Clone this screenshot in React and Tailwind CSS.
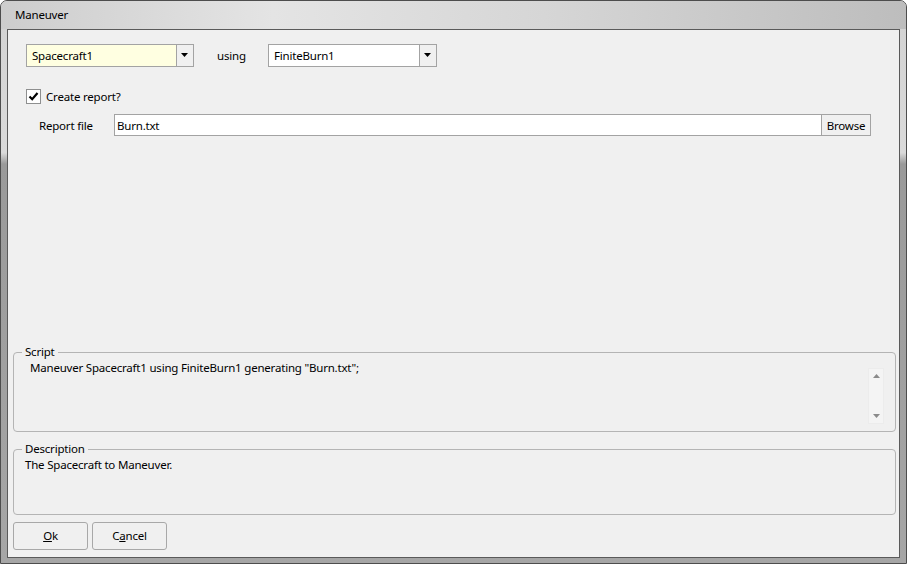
import React from 'react'

const font = { fontFamily: '"Noto Sans", "Open Sans", sans-serif' }

const Arrow = () => (
  <svg width="8" height="5" viewBox="0 0 8 5">
    <path d="M0 0 H7 L3.5 4 Z" fill="#000" />
  </svg>
)

const Combo = ({ value, bg }) => (
  <div className={`flex h-[23px] border border-[#a3a3a3] ${bg}`}>
    <div className="flex-1 flex items-center pl-[5px] text-[11.5px] tracking-[-0.2px] text-black">{value}</div>
    <div className="w-[17px] flex items-center justify-center border-l border-[#a3a3a3] bg-[#f0f0f0]">
      <Arrow />
    </div>
  </div>
)

const GroupBox = ({ title, className, children }) => (
  <fieldset className={`border border-[#b4b4b4] rounded-[4px] ${className}`}>
    <legend className="ml-[8px] px-[3px] text-[11.5px] tracking-[-0.2px] leading-[14px] text-black">{title}</legend>
    {children}
  </fieldset>
)

const App = () => {
  return (
    <div
      className="w-[907px] h-[564px] rounded-t-[7px] border border-[#4d4d4d] bg-[linear-gradient(to_bottom,#d2d2d2_0%,#dadada_27%,#9a9a9a_29%,#a6a6a6_100%)] flex flex-col px-[6px] pb-[5px] text-[11.5px] tracking-[-0.2px]"
      style={font}
    >
      {/* title bar */}
      <div className="h-[28px] -mx-[6px] px-[14px] flex items-center rounded-t-[6px] bg-[linear-gradient(to_right,#cdcdcd,#e4e4e4_30%,#d6d6d6_60%,#bdbdbd)]">
        <span className="text-black">Maneuver</span>
      </div>

      {/* content */}
      <div className="flex-1 border border-[#5a5a5a] bg-[#f0f0f0] flex flex-col">
        <div className="pl-[18px] pt-[14px] flex items-center">
          <div className="w-[168px]">
            <Combo value="Spacecraft1" bg="bg-[#ffffe1]" />
          </div>
          <span className="ml-[23px] w-[51px] text-black">using</span>
          <div className="w-[169px]">
            <Combo value="FiniteBurn1" bg="bg-white" />
          </div>
        </div>

        <div className="pl-[18px] mt-[21px] flex items-center">
          <div className="w-[15px] h-[15px] border border-[#8e8f8f] bg-white flex items-center justify-center">
            <svg width="11" height="11" viewBox="0 0 11 11">
              <path d="M1.5 5.5 L4.2 8.2 L9.5 2" stroke="#000" strokeWidth="2.2" fill="none" />
            </svg>
          </div>
          <span className="ml-[5px] text-black">Create report?</span>
        </div>

        <div className="pl-[31px] mt-[9px] flex items-center">
          <span className="w-[75px] text-black">Report file</span>
          <div className="w-[708px] h-[22px] border border-[#a3a3a3] bg-white flex items-center pl-[2px] text-black">
            Burn.txt
          </div>
          <div className="w-[49px] h-[22px] border border-l-0 border-[#a3a3a3] bg-[#f0f0f0] flex items-center justify-center text-black">
            Browse
          </div>
        </div>

        <div className="flex-1" />

        <GroupBox title="Script" className="ml-[5px] mr-[3px] h-[87px] relative">
          <div className="pl-[16px] pt-[1px] text-black leading-[16px]">
            Maneuver Spacecraft1 using FiniteBurn1 generating "Burn.txt";
          </div>
          <div className="absolute right-[11px] top-[9px] w-[16px] h-[56px] bg-[#f4f4f4] border border-[#ececec] flex flex-col items-center justify-between py-[5px]">
            <svg width="7" height="4" viewBox="0 0 7 4">
              <path d="M0 4 H7 L3.5 0 Z" fill="#8a8a8a" />
            </svg>
            <svg width="7" height="4" viewBox="0 0 7 4">
              <path d="M0 0 H7 L3.5 4 Z" fill="#8a8a8a" />
            </svg>
          </div>
        </GroupBox>

        <GroupBox title="Description" className="ml-[5px] mr-[3px] mt-[10px] h-[73px]">
          <div className="pl-[11px] pt-[1px] text-black leading-[16px]">
            The Spacecraft to Maneuver.
          </div>
        </GroupBox>

        <div className="ml-[5px] mt-[7px] mb-[7px] flex gap-[4px]">
          <button className="w-[75px] h-[28px] rounded-[3px] border border-[#a8a8a8] bg-[#f0f0f0] text-black">
            <span className="underline">O</span>k
          </button>
          <button className="w-[75px] h-[28px] rounded-[3px] border border-[#a8a8a8] bg-[#f0f0f0] text-black">
            C<span className="underline">a</span>ncel
          </button>
        </div>
      </div>
    </div>
  )
}

export default App
